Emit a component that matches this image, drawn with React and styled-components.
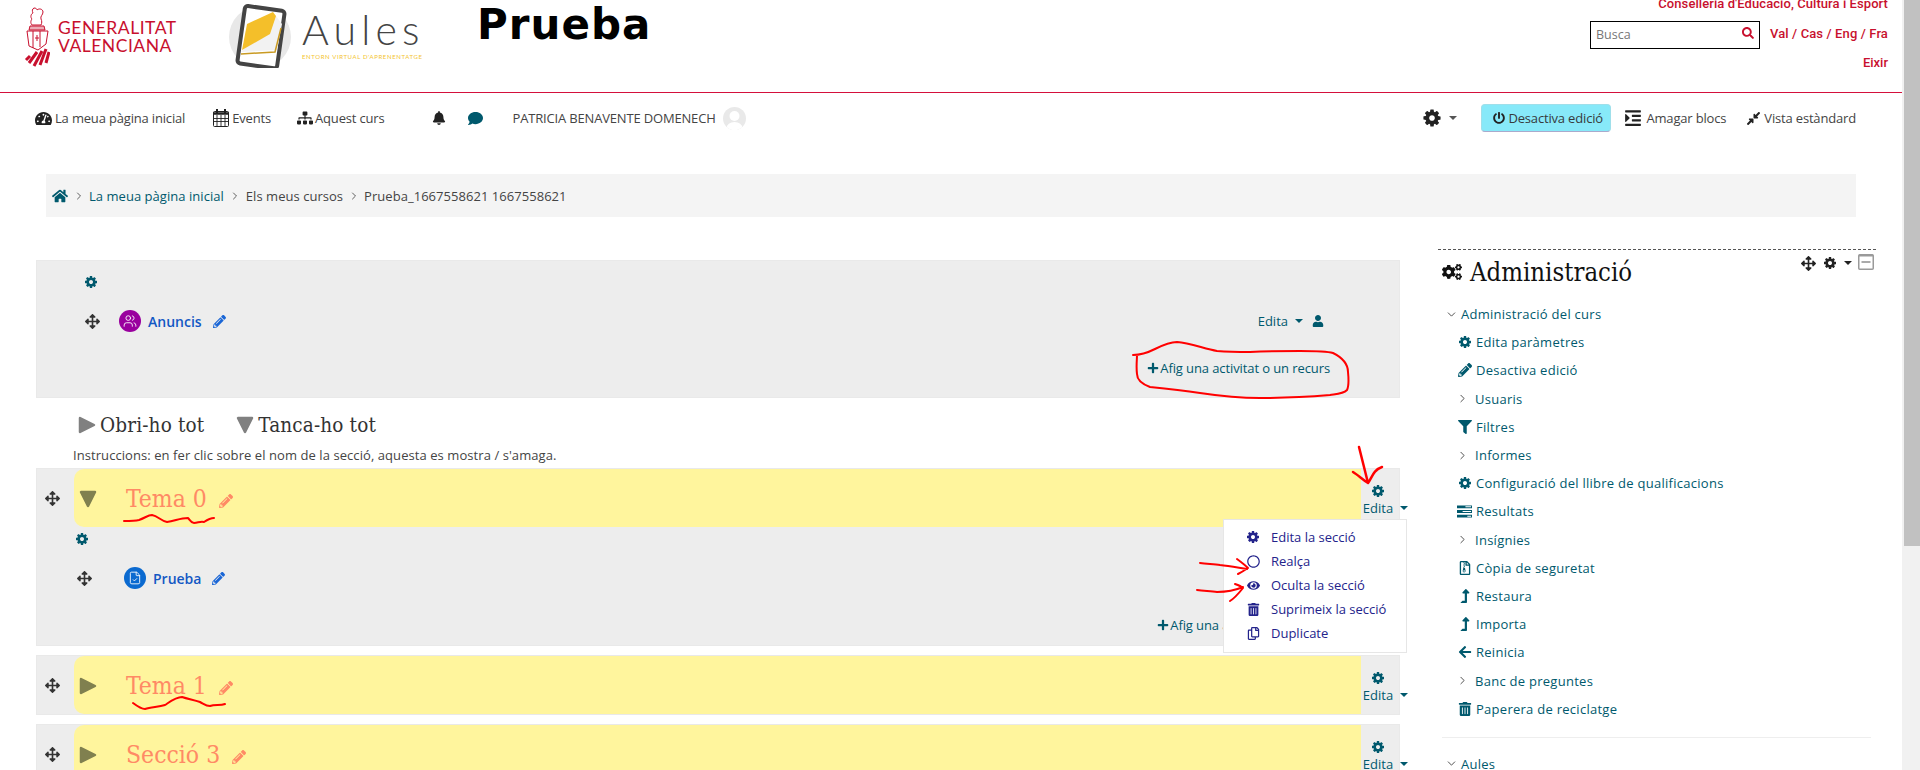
import React from "react";
import styled, { createGlobalStyle } from "styled-components";
import {
  FaTachometerAlt, FaSitemap, FaBell, FaComment, FaHome, FaPowerOff, FaIndent, FaCompressAlt,
  FaSearch, FaUser, FaPlus, FaEye, FaTrashAlt, FaRegCircle, FaRegCopy, FaCogs, FaFilter, FaLevelUpAlt, FaArrowLeft,
  FaRegFileArchive, FaPencilAlt, FaArrowsAlt,
} from "react-icons/fa";
import { Users, FileCheck, ChevronRight, ChevronDown } from "lucide-react";

const TEAL = "#00596d";
const RED = "#c8102e";
const SANS = '"Open Sans", "Liberation Sans", sans-serif';
const SLAB = '"DejaVu Serif", "Liberation Serif", serif';

const Global = createGlobalStyle`
  html, body { margin: 0; padding: 0; height: 770px; overflow: hidden; background: #fff; }
  body { font-family: ${SANS}; font-size: 13px; color: #444; }
  * { box-sizing: border-box; }
`;

const Shell = styled.div`display: flex; width: 1920px; height: 770px; overflow: hidden; position: relative;`;
const Page = styled.div`width: 1902px; height: 770px; overflow: hidden; flex: none;`;
const ScrollTrack = styled.div`width: 18px; height: 770px; background: #f1f1f1; padding-left: 2px; flex: none;`;
const ScrollThumb = styled.div`height: 546px; background: #c1c1c1;`;

const Header = styled.header`display: flex; justify-content: space-between; height: 93px; border-bottom: 1px solid #d4103c; overflow: hidden;`;
const Logos = styled.div`display: flex; align-items: flex-start;`;
const GvLogo = styled.div`display: flex; align-items: center; gap: 8px; margin: 7px 0 0 24px; width: 153px; height: 60px;`;
const GvText = styled.div`font-family: Lato, sans-serif; font-size: 17.5px; line-height: 18.5px; letter-spacing: .5px; color: ${RED}; font-weight: 400; white-space: nowrap;`;
const AulesLogo = styled.div`display: flex; margin: 4px 0 0 52px; width: 194px; gap: 7px;`;
const AulesWords = styled.div`display: flex; flex-direction: column; padding-top: 3px;`;
const AulesName = styled.div`font-family: Lato, sans-serif; font-weight: 300; font-size: 41px; line-height: 46px; letter-spacing: 5.2px; color: #444;`;
const AulesTag = styled.div`font-family: Lato, sans-serif; font-size: 6px; line-height: 8px; letter-spacing: .62px; color: #f4c430; white-space: nowrap;`;
const CourseLogo = styled.div`font-family: "DejaVu Sans", sans-serif; font-weight: 700; font-size: 42px; line-height: 44px; letter-spacing: 1px; color: #000; margin: 3px 0 0 54px;`;

const HeaderRight = styled.div`display: flex; flex-direction: column; align-items: flex-end; padding-right: 14px; margin-top: -5px; font-family: Roboto, sans-serif; color: ${RED}; font-size: 13px; font-weight: 500;`;
const Ministry = styled.div`line-height: 18px; height: 18px; white-space: nowrap; letter-spacing: .07px;`;
const SearchRow = styled.div`display: flex; align-items: center; margin-top: 8px; gap: 10px;`;
const SearchBox = styled.div`display: flex; align-items: center; justify-content: space-between; width: 170px; height: 28px; border: 1px solid #000; padding: 0 5px 2px 5px; font-family: ${SANS}; font-weight: 400; color: #777; font-size: 12.5px; svg { color: ${RED}; font-size: 12px; margin-bottom: 3px; }`;
const Langs = styled.div`white-space: nowrap; letter-spacing: .12px; margin-top: -3px;`;
const Logout = styled.div`margin-top: 6px;`;

const Nav = styled.nav`display: flex; justify-content: space-between; align-items: center; height: 50px; padding: 0 46px 0 35px; letter-spacing: -.17px;`;
const NavGroup = styled.div`display: flex; align-items: center;`;
const NavItem = styled.span`display: inline-flex; align-items: center; gap: ${p => p.$icon ?? 3}px; margin-left: ${p => p.$gap ?? 0}px; color: #444; white-space: nowrap; svg { color: #222; font-size: 16px; flex: none; }`;
const NavGlyph = styled.span`display: inline-flex; margin-left: ${p => p.$gap}px; color: ${p => p.$color}; font-size: ${p => p.$size}px;`;
const Avatar = styled.span`display: block; width: 23px; height: 23px; border-radius: 50%; background: #e9e9e9; margin-left: 7px; overflow: hidden;`;
const Caret = styled.span`display: inline-block; width: 0; height: 0; border-left: 4px solid transparent; border-right: 4px solid transparent; border-top: 4px solid ${p => p.$color || TEAL}; margin-left: ${p => p.$gap ?? 7}px;`;
const EditButton = styled.span`display: inline-flex; align-items: center; gap: 3px; height: 28px; width: 130px; padding-left: 11px; margin-left: 24px; background: #87e9f9; border: 1px solid #9fdfea; border-bottom-color: #aac; border-radius: 4px; color: #373a3c; white-space: nowrap; svg { font-size: 12px; color: #222; }`;

const Crumbs = styled.div`display: flex; align-items: center; height: 43px; margin: 31px 46px 43px; padding-left: 6px; background: #f4f4f4; color: #444; letter-spacing: .04px;`;
const CrumbLink = styled.span`color: ${TEAL}; white-space: nowrap; margin-right: 1px;`;
const CrumbSep = styled.span`display: inline-flex; margin: 0 7px; color: #444; width: 7px; justify-content: center; align-items: center; svg { flex: none; }`;
const HomeIcon = styled.span`display: inline-flex; color: ${TEAL}; font-size: 16px;`;

const Columns = styled.div`display: grid; grid-template-columns: 1364px 438px; column-gap: 38px; padding-left: 36px;`;
const MainCol = styled.main`display: flex; flex-direction: column;`;
const SideCol = styled.aside`margin-top: -11px;`;

const GrayBlock = styled.section`position: relative; background: #ededed; border: 1px solid #e9e9e9; height: ${p => p.$h}px; flex: none;`;
const GearRow = styled.div`display: flex; align-items: center; height: 24px; padding-left: ${p => p.$left}px; margin-top: ${p => p.$top ?? 0}px; color: ${TEAL}; font-size: 14px;`;
const ModuleRow = styled.div`display: flex; align-items: center; height: 34px; margin-top: 10px; padding-left: ${p => p.$left}px; padding-right: 75px; svg.move { color: #333; font-size: 15px; }`;
const ModuleIcon = styled.span`display: flex; align-items: center; justify-content: center; width: 22px; height: 22px; border-radius: 50%; background: ${p => p.$bg}; color: #fff; margin: 0 7px 0 ${p => p.$gap}px; flex: none;`;
const ModuleName = styled.span`color: #1358c4; font-size: 14px; font-weight: 600;`;
const PencilLink = styled.span`display: inline-flex; color: #1a66d6; font-size: 13px; margin-left: 11px;`;
const EditMenu = styled.span`margin-left: auto; display: inline-flex; align-items: center; color: ${TEAL};`;
const PersonIcon = styled.span`display: inline-flex; margin-left: 9px; font-size: 12px; color: ${TEAL};`;
const AddRow = styled.div`display: flex; justify-content: flex-end; align-items: center; height: 20px; margin-top: 20px; padding-right: ${p => p.$right}px; color: ${TEAL}; letter-spacing: -.1px; white-space: nowrap; svg { font-size: 12px; margin-right: 1px; }`;

const Toggles = styled.div`display: flex; align-items: center; height: 26px; margin-top: 14px; padding-left: 42px; font-family: ${SLAB}; font-stretch: condensed; font-size: 20.5px; letter-spacing: .15px; color: #333;`;
const ToggleItem = styled.span`display: inline-flex; align-items: center; gap: 4px; margin-right: 32px; white-space: nowrap;`;
const Hint = styled.div`height: 20px; margin-top: 7px; padding-left: 37px; line-height: 20px; font-size: 13px; letter-spacing: .07px; color: #444; white-space: nowrap;`;

const SectionHead = styled.div`display: flex; align-items: stretch; height: 58px;`;
const MoveCell = styled.div`width: 37px; display: flex; align-items: center; justify-content: flex-start; padding-left: 8px; padding-top: 1px; color: #333; font-size: 15px; flex: none;`;
const YellowBar = styled.div`flex: 1; display: flex; align-items: center; background: #fff59d; border-radius: 10px 0 0 10px; padding: 1px 0 0 5px; font-family: ${SLAB}; font-stretch: condensed; font-size: 24.5px; color: #ff8a65;`;
const SectionTitle = styled.span`margin-left: 29px; white-space: nowrap;`;
const SectionPencil = styled.span`display: inline-flex; margin-left: 12px; font-size: 14px; color: #ff8a65; margin-top: 5px;`;
const SideCell = styled.div`width: 38px; flex: none; display: flex; flex-direction: column; align-items: center; color: ${TEAL}; padding-top: 15px; white-space: nowrap; line-height: 18px;`;
const SideGear = styled.span`display: inline-flex; font-size: 14px; margin: 0 4px 1px 0;`;
const SideEdit = styled.span`display: inline-flex; align-items: center; margin-left: 11px;`;

const SectionMenu = styled.div`position: absolute; left: 1186px; top: 50px; width: 184px; height: 134px; background: #fff; border: 1px solid #e6e6e6; padding-top: 5px; z-index: 3;`;
const MenuRow = styled.div`display: flex; align-items: center; height: 24px; color: #23238b; white-space: nowrap;`;
const MenuIcon = styled.span`display: inline-flex; justify-content: center; width: 14px; margin: 0 11px 0 22px; font-size: 13px;`;

const BlockTitleRow = styled.div`display: flex; justify-content: space-between; height: 51px; border-top: 1px dashed #555; padding: 3px 2px 0 4px;`;
const BlockTitle = styled.h2`display: flex; align-items: center; gap: 8px; margin: 0; height: 37px; font-family: ${SLAB}; font-stretch: condensed; font-weight: 400; font-size: 25.5px; color: #111;`;
const BlockTools = styled.div`display: flex; align-items: flex-start; color: #222;`;
const ToolGlyph = styled.span`display: inline-flex; margin: ${p => p.$m}; font-size: ${p => p.$size}px; color: ${p => p.$color || "#222"};`;
const TreeRow = styled.div`display: flex; align-items: center; height: 28.2px; padding-left: ${p => p.$left}px; color: ${TEAL}; font-size: 13px; letter-spacing: .27px; white-space: nowrap;`;
const TreeIcon = styled.span`display: inline-flex; justify-content: center; width: 15px; margin-right: 4px; font-size: 14px; color: ${TEAL};`;
const TreeChevron = styled.span`display: inline-flex; justify-content: center; width: ${p => p.$w}px; color: #444; margin-right: ${p => p.$gap}px; svg { flex: none; }`;
const TreeRule = styled.hr`border: 0; border-top: 1px solid #eee; margin: 14px 5px 12px 4px;`;
const Scribbles = styled.svg`position: absolute; left: 0; top: 0; z-index: 5; pointer-events: none;`;

const Gear = ({ size = 14 }) => (
  <svg width={size} height={size} viewBox="0 0 1792 1792" fill="currentColor">
    <path d="M1152 896q0-106-75-181t-181-75-181 75-75 181 75 181 181 75 181-75 75-181zm512-109v222q0 12-8 23t-20 13l-185 28q-19 54-39 91 35 50 107 138 10 12 10 25t-9 23q-27 37-99 108t-94 71q-12 0-26-9l-138-108q-44 23-91 38-16 136-29 186-7 28-36 28h-222q-14 0-24.500-8.500t-11.500-21.500l-28-184q-49-16-90-37l-141 107q-10 9-25 9-14 0-25-11-126-114-165-168-7-10-7-23 0-12 8-23 15-21 51-66.500t54-70.500q-27-50-41-99l-183-27q-13-2-21-12.500t-8-23.500v-222q0-12 8-23t19-13l186-28q14-46 39-92-40-57-107-138-10-12-10-24 0-10 9-23 26-36 98.500-107.500t94.500-71.500q13 0 26 10l138 107q44-23 91-38 16-136 29-186 7-28 36-28h222q14 0 24.500 8.500t11.500 21.500l28 184q49 16 90 37l142-107q9-9 24-9 13 0 25 10 129 119 165 170 7 8 7 22 0 12-8 23-15 21-51 66.500t-54 70.500q26 50 41 98l183 28q13 2 21 12.500t8 23.500z" />
  </svg>
);

const Tri = ({ dir, fill, size = 18 }) => (
  <svg width={size} height={size} viewBox="0 0 18 18" style={{ flex: "none" }}>
    {dir === "right"
      ? <path d="M2 2 L16 9 L2 16 Z" fill={fill} stroke={fill} strokeWidth="2.500" strokeLinejoin="round" />
      : <path d="M2 2 L16 2 L9 16 Z" fill={fill} stroke={fill} strokeWidth="2.500" strokeLinejoin="round" />}
  </svg>
);

const Shield = () => (
  <svg width="26" height="60" viewBox="0 0 26 60" fill="none" stroke={RED} strokeWidth="1" style={{ flex: "none" }}>
    <path d="M10 1c2 0 3 1 3 2 2-2 6-1 6 2 0 3-3 4-2 7 1 2 1 4 0 6H8c-2-2-1-5 0-6-2-2-1-5 1-6-1-2-1-4 1-5z" />
    <path d="M6 19h14l1 4H5z" fill={RED} fillOpacity=".35" />
    <path d="M3 24h21l-2 13-8 6-9-4z" />
    <path d="M9 24v17M16 24v16M11 31h4M13 28v6" />
    <path d="M6 49 L2 53 M13 45 L5 56 M18 44 L10 59 M22 42 L16 58 M25 45 L22 56" stroke={RED} strokeWidth="3" />
  </svg>
);

const Book = () => (
  <svg width="66" height="64" viewBox="0 0 66 64" style={{ flex: "none" }}>
    <circle cx="31" cy="33" r="31" fill="#e8e8e8" />
    <g transform="rotate(8 31 33)">
      <rect x="12" y="4" width="40" height="58" rx="3" fill="#fff" stroke="#444" strokeWidth="4" />
    </g>
    <path d="M47 12 L53 20 L48 46 L12 48 Z" fill="#f2f2f2" />
    <path d="M18 20 L44 8 L47 12 L41 30 L13 46 Z" fill="#f4bf2a" />
    <path d="M12 50 L46 48 L52 24" fill="none" stroke="#c99a22" strokeWidth="1.500" />
    <circle cx="29" cy="58" r="1.500" fill="#fff" />
  </svg>
);

const CalendarIcon = () => (
  <svg width="16" height="18" viewBox="0 0 16 18" fill="none" stroke="#222">
    <rect x=".5" y="2.500" width="15" height="15" rx="1" />
    <path d="M0 4.500h16" strokeWidth="2.500" />
    <path d="M0 9.500h16M0 12.500h16M4 6v11M8 6v11M12 6v11" strokeWidth=".9" />
    <path d="M4 0v4M12 0v4" strokeWidth="2" strokeLinecap="round" />
  </svg>
);

const ResultsIcon = () => (
  <svg width="16" height="13" viewBox="0 0 16 13" fill="currentColor">
    <path d="M0 0h16v3H0zM0 5h16v3H0zM0 10h16v3H0z" />
    <path d="M9 1h6v1H9zM6 6h9v1H6zM11 11h4v1h-4z" fill="#fff" />
  </svg>
);

const MinimizeBox = () => (
  <svg width="16" height="16" viewBox="0 0 16 16" style={{ marginLeft: 6, marginTop: -7 }}>
    <rect x=".75" y=".75" width="14.500" height="14.500" rx="1" fill="#fff" stroke="#9a9a9a" strokeWidth="1.500" />
    <path d="M1 1.500h14" stroke="#9a9a9a" strokeWidth="2" />
    <rect x="3.500" y="7" width="9" height="2" fill="#aaa" />
  </svg>
);

const AvatarFace = () => (
  <svg width="23" height="23" viewBox="0 0 23 23">
    <circle cx="11.500" cy="9" r="5" fill="#fff" />
    <ellipse cx="11.500" cy="21" rx="8" ry="6" fill="#fff" />
  </svg>
);

const Sep = () => <CrumbSep><ChevronRight size={12} strokeWidth={1.700} /></CrumbSep>;

const treeItems = [
  ["icon", <Gear size={14} />, "Edita paràmetres"],
  ["icon", <FaPencilAlt />, "Desactiva edició"],
  ["branch", null, "Usuaris"],
  ["icon", <FaFilter />, "Filtres"],
  ["branch", null, "Informes"],
  ["icon", <Gear size={14} />, "Configuració del llibre de qualificacions"],
  ["icon", <ResultsIcon />, "Resultats"],
  ["branch", null, "Insígnies"],
  ["icon", <FaRegFileArchive />, "Còpia de seguretat"],
  ["icon", <FaLevelUpAlt />, "Restaura"],
  ["icon", <FaLevelUpAlt />, "Importa"],
  ["icon", <FaArrowLeft />, "Reinicia"],
  ["branch", null, "Banc de preguntes"],
  ["icon", <FaTrashAlt />, "Paperera de reciclatge"],
];

const menuItems = [
  [<Gear size={14} />, "Edita la secció"],
  [<FaRegCircle />, "Realça"],
  [<FaEye />, "Oculta la secció"],
  [<FaTrashAlt />, "Suprimeix la secció"],
  [<FaRegCopy />, "Duplicate"],
];

function CollapsedSection({ title, dir, top, height, children }) {
  return (
    <GrayBlock $h={height} style={{ marginTop: top }}>
      <SectionHead>
        <MoveCell><FaArrowsAlt /></MoveCell>
        <YellowBar>
          <Tri dir={dir} fill="#80804f" />
          <SectionTitle>{title}</SectionTitle>
          <SectionPencil><FaPencilAlt /></SectionPencil>
        </YellowBar>
        <SideCell>
          <SideGear><Gear size={14} /></SideGear>
          <SideEdit>Edita<Caret /></SideEdit>
        </SideCell>
      </SectionHead>
      {children}
    </GrayBlock>
  );
}

export default function App() {
  return (
    <Shell>
      <Global />
      <Page>
        <Header>
          <Logos>
            <GvLogo>
              <Shield />
              <GvText>GENERALITAT<br />VALENCIANA</GvText>
            </GvLogo>
            <AulesLogo>
              <Book />
              <AulesWords>
                <AulesName>Aules</AulesName>
                <AulesTag>ENTORN VIRTUAL D'APRENENTATGE</AulesTag>
              </AulesWords>
            </AulesLogo>
            <CourseLogo>Prueba</CourseLogo>
          </Logos>
          <HeaderRight>
            <Ministry>Conselleria d'Educació, Cultura i Esport</Ministry>
            <SearchRow>
              <SearchBox>Busca<FaSearch /></SearchBox>
              <Langs>Val / Cas / Eng / Fra</Langs>
            </SearchRow>
            <Logout>Eixir</Logout>
          </HeaderRight>
        </Header>

        <Nav>
          <NavGroup>
            <NavItem><FaTachometerAlt style={{ fontSize: 17 }} />La meua pàgina inicial</NavItem>
            <NavItem $gap={28}><CalendarIcon />Events</NavItem>
            <NavItem $gap={26} $icon={2}><FaSitemap />Aquest curs</NavItem>
            <NavGlyph $gap={47} $color="#222" $size={14}><FaBell /></NavGlyph>
            <NavGlyph $gap={22} $color={TEAL} $size={15}><FaComment /></NavGlyph>
            <NavItem $gap={30}>PATRICIA BENAVENTE DOMENECH</NavItem>
            <Avatar><AvatarFace /></Avatar>
          </NavGroup>
          <NavGroup>
            <NavGlyph $gap={0} $color="#222" $size={20}><Gear size={20} /></NavGlyph>
            <Caret $color="#555" />
            <EditButton><FaPowerOff />Desactiva edició</EditButton>
            <NavItem $gap={13} $icon={4}><FaIndent style={{ fontSize: 18 }} />Amagar blocs</NavItem>
            <NavItem $gap={20} $icon={3}><FaCompressAlt style={{ fontSize: 15 }} />Vista estàndard</NavItem>
          </NavGroup>
        </Nav>

        <Crumbs>
          <HomeIcon><FaHome /></HomeIcon>
          <Sep />
          <CrumbLink>La meua pàgina inicial</CrumbLink>
          <Sep />
          <span>Els meus cursos</span>
          <Sep />
          <span>Prueba_1667558621 1667558621</span>
        </Crumbs>

        <Columns>
          <MainCol>
            <GrayBlock $h={138}>
              <GearRow $left={47} $top={9}><Gear size={14} /></GearRow>
              <ModuleRow $left={48}>
                <FaArrowsAlt className="move" />
                <ModuleIcon $bg="#99009e" $gap={19}><Users size={14} strokeWidth={1.500} /></ModuleIcon>
                <ModuleName>Anuncis</ModuleName>
                <PencilLink><FaPencilAlt /></PencilLink>
                <EditMenu>Edita<Caret /><PersonIcon><FaUser /></PersonIcon></EditMenu>
              </ModuleRow>
              <AddRow $right={69}><FaPlus />Afig una activitat o un recurs</AddRow>
            </GrayBlock>

            <Toggles>
              <ToggleItem><Tri dir="right" fill="#808080" />Obri-ho tot</ToggleItem>
              <ToggleItem><Tri dir="down" fill="#808080" />Tanca-ho tot</ToggleItem>
            </Toggles>
            <Hint>Instruccions: en fer clic sobre el nom de la secció, aquesta es mostra / s'amaga.</Hint>

            <CollapsedSection title="Tema 0" dir="down" top={3} height={178}>
              <GearRow $left={38}><Gear size={14} /></GearRow>
              <ModuleRow $left={40}>
                <FaArrowsAlt className="move" />
                <ModuleIcon $bg="#0b6ad0" $gap={32}><FileCheck size={14} strokeWidth={1.500} /></ModuleIcon>
                <ModuleName>Prueba</ModuleName>
                <PencilLink><FaPencilAlt /></PencilLink>
              </ModuleRow>
              <AddRow $right={59}><FaPlus />Afig una activitat o un recurs</AddRow>
              <SectionMenu>
                {menuItems.map(([icon, label]) => (
                  <MenuRow key={label}><MenuIcon>{icon}</MenuIcon>{label}</MenuRow>
                ))}
              </SectionMenu>
            </CollapsedSection>

            <CollapsedSection title="Tema 1" dir="right" top={9} height={60} />
            <CollapsedSection title="Secció 3" dir="right" top={9} height={60} />
          </MainCol>

          <SideCol>
            <BlockTitleRow>
              <BlockTitle><FaCogs style={{ fontSize: 20 }} />Administració</BlockTitle>
              <BlockTools>
                <ToolGlyph $m="3px 7px 0 0" $size={15}><FaArrowsAlt /></ToolGlyph>
                <ToolGlyph $m="3px 0 0 0" $size={14}><Gear size={14} /></ToolGlyph>
                <Caret $color="#222" style={{ marginTop: 8 }} />
                <ToolGlyph $m="8px 0 0 0" $size={16}><MinimizeBox /></ToolGlyph>
              </BlockTools>
            </BlockTitleRow>
            <TreeRow $left={9}>
              <TreeChevron $w={9} $gap={5}><ChevronDown size={13} strokeWidth={1.700} /></TreeChevron>Administració del curs
            </TreeRow>
            {treeItems.map(([kind, icon, label]) =>
              kind === "icon" ? (
                <TreeRow key={label} $left={19}><TreeIcon>{icon}</TreeIcon>{label}</TreeRow>
              ) : (
                <TreeRow key={label} $left={21}><TreeChevron $w={7} $gap={9}><ChevronRight size={13} strokeWidth={1.700} /></TreeChevron>{label}</TreeRow>
              )
            )}
            <TreeRule />
            <TreeRow $left={9}>
              <TreeChevron $w={9} $gap={5}><ChevronDown size={13} strokeWidth={1.700} /></TreeChevron>Aules
            </TreeRow>
          </SideCol>
        </Columns>
      </Page>
      <ScrollTrack><ScrollThumb /></ScrollTrack>

      <Scribbles width="1920" height="770" viewBox="0 0 1920 770" fill="none" stroke="#f00" strokeWidth="2" strokeLinecap="round" strokeLinejoin="round">
        <path d="M1133 355C1140 355 1147 353 1155 349C1165 344 1172 342 1177 342C1190 343 1205 349 1217 351C1230 352 1240 352 1250 352C1270 351 1285 351 1300 351C1315 351 1326 351 1333 353C1343 358 1348 365 1348 372C1349 382 1348 388 1347 390C1343 394 1337 394 1330 395C1305 397 1283 398 1260 398C1240 398 1220 396 1200 393C1180 390 1160 388 1150 387C1142 384 1137 380 1137 374C1136 366 1137 360 1137 355" />
        <path d="M1359 447L1368 483M1353 472C1358 475 1363 480 1368 483C1372 478 1373 470 1382 467" strokeWidth="2.500" />
        <path d="M124 521C130 521 135 521 139 520C145 518 148 515 152 515C158 516 161 521 167 522C175 521 180 518 188 518C190 520 191 523 194 523C198 523 200 521 204 522C207 520 210 518 214 518" />
        <path d="M133 703C137 706 141 709 145 709C151 707 158 707 165 705C171 701 176 697 182 697C188 699 194 700 200 702C204 704 206 706 210 706C215 704 220 706 225 704" />
        <path d="M1200 563C1207 564 1214 564 1220 565C1230 566 1240 568 1247 569M1237 559C1241 562 1245 565 1248 568C1245 570 1242 572 1238 574" />
        <path d="M1197 590C1204 591 1211 591 1217 592C1226 592 1236 590 1243 587M1235 584C1238 585 1241 586 1243 588C1239 593 1235 598 1230 601" />
      </Scribbles>
    </Shell>
  );
}
